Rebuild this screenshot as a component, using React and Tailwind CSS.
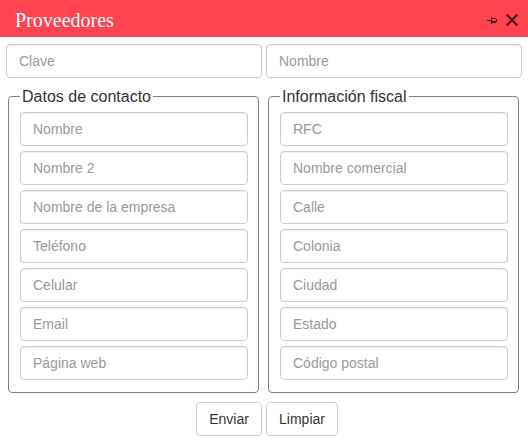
const contact = ['Nombre', 'Nombre 2', 'Nombre de la empresa', 'Teléfono', 'Celular', 'Email', 'Página web'];
const fiscal = ['RFC', 'Nombre comercial', 'Calle', 'Colonia', 'Ciudad', 'Estado', 'Código postal'];

function Field({ label }) {
  return (
    <input
      type="text"
      placeholder={label}
      className="block h-[34px] w-full rounded-[4px] border border-[#ccc] bg-white px-3 py-1.5 text-[14px] leading-5 text-[#555] shadow-[inset_0_1px_1px_rgba(0,0,0,0.075)] outline-none placeholder:text-[#999]"
    />
  );
}

function Group({ title, fields }) {
  return (
    <fieldset className="h-[308px] w-[251px] rounded-[4px] border border-[#808080] pl-[11px] pr-[10px] pt-1">
      <legend className="h-[23px] px-0.5 text-[16px] leading-[23px] text-[#333]">{title}</legend>
      <div className="flex w-[228px] flex-col gap-[5px]">
        {fields.map((f) => (
          <Field key={f} label={f} />
        ))}
      </div>
    </fieldset>
  );
}

function Button({ children, className }) {
  return (
    <button className={`h-[34px] rounded-[4px] border border-[#ccc] bg-white text-center text-[14px] leading-5 text-[#333] ${className}`}>
      {children}
    </button>
  );
}

export default function App() {
  return (
    <div className="h-[445px] w-[528px] overflow-hidden bg-white font-['Liberation_Sans',Arial,sans-serif]">
      <header className="flex h-[37px] items-center justify-between bg-[#ff4351] pl-[15px] pr-[10px]">
        <h1 className="pt-[2px] font-['Liberation_Serif',serif] text-[20px] leading-6 text-white">Proveedores</h1>
        <div className="flex items-center gap-[9px] pt-[3px]">
          <svg width="10" height="8" viewBox="0 0 10 8" fill="none" stroke="#4d1418" shapeRendering="crispEdges">
            <path d="M0 4.5H4M4.5 1V8M4 2.5H9M9.5 3V6" />
            <path d="M4 6H9" strokeWidth="2" />
          </svg>
          <svg width="12" height="12" viewBox="0 0 12 12" fill="none" stroke="#4d1418" strokeWidth="2.2">
            <path d="M0.7 0.7L11.3 11.3M11.3 0.7L0.7 11.3" />
          </svg>
        </div>
      </header>
      <main>
        <div className="grid grid-cols-2 gap-1 px-1.5 pt-[7px]">
          <Field label="Clave" />
          <Field label="Nombre" />
        </div>
        <div className="flex gap-[9px] pl-2 pt-[7px]">
          <Group title="Datos de contacto" fields={contact} />
          <Group title="Información fiscal" fields={fiscal} />
        </div>
        <div className="flex gap-1 pl-[196px] pt-[9px]">
          <Button className="w-[66px]">Enviar</Button>
          <Button className="w-[72px]">Limpiar</Button>
        </div>
      </main>
    </div>
  );
}
